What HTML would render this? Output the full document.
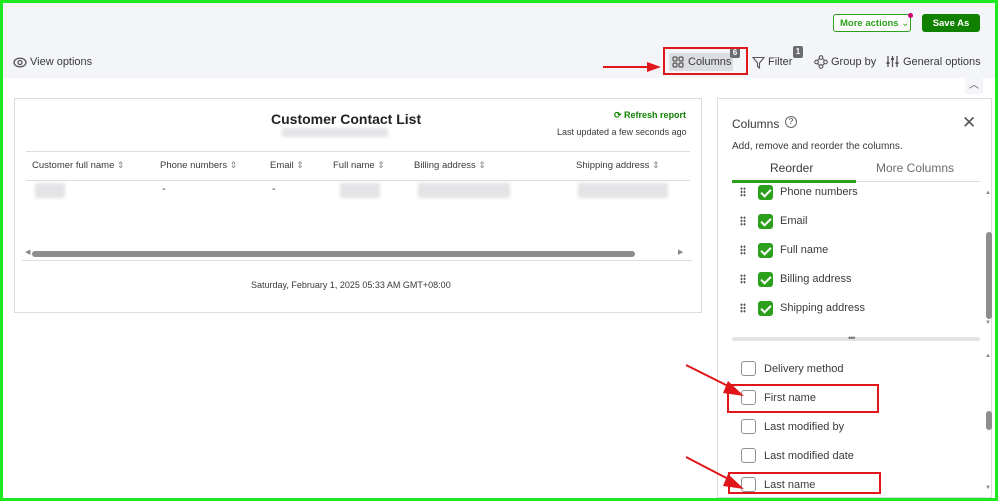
<!DOCTYPE html>
<html><head><meta charset="utf-8"><style>
*{box-sizing:border-box;margin:0;padding:0}
body{width:998px;height:501px;overflow:hidden;font-family:"Liberation Sans",sans-serif;background:#fff;position:relative;color:#393a3d}
.a{position:absolute}
.t{font-size:11px;white-space:nowrap}
.cb{position:absolute;width:15px;height:15px;border-radius:3px;background:#2ca01c}
.cb:after{content:"";position:absolute;left:5px;top:2px;width:4px;height:8px;border:solid #fff;border-width:0 2px 2px 0;transform:rotate(45deg)}
.ub{position:absolute;width:15px;height:15px;border-radius:3px;border:1px solid #8d9096;background:#fff}
.dr{position:absolute;width:6px;height:10px;background-image:radial-gradient(circle,#555 1px,transparent 1.2px);background-size:3px 3.3px}
.blur{position:absolute;background:#e4e4e6;filter:blur(1.5px)}
.rb{position:absolute;border:2px solid #e0161b}
.s{color:#888;font-size:9px}
</style></head><body>
<div class="a" style="left:0;top:0;width:998px;height:78px;background:#f4f5f8"></div>
<div class="a t" style="left:833px;top:14px;width:78px;height:18px;border:1.5px solid #2ca01c;border-radius:3px;background:#fff;color:#2ca01c;font-weight:bold;font-size:9.5px;display:flex;align-items:center;padding-left:6px">More actions&nbsp;<span style="font-weight:normal">⌄</span></div>
<div class="a" style="left:908px;top:13px;width:5px;height:5px;border-radius:50%;background:#c9007a"></div>
<div class="a t" style="left:922px;top:14px;width:58px;height:18px;border-radius:3px;background:#108000;color:#fff;font-weight:bold;font-size:9.5px;display:flex;align-items:center;justify-content:center">Save As</div>
<svg class="a" style="left:13px;top:57px" width="14" height="11" viewBox="0 0 14 11"><ellipse cx="7" cy="5.5" rx="6" ry="4.3" fill="none" stroke="#555" stroke-width="1.3"/><circle cx="7" cy="5.5" r="2" fill="none" stroke="#555" stroke-width="1.3"/></svg>
<div class="a t" style="left:30px;top:56px;color:#393a3d">View options</div>
<div class="a" style="left:669px;top:53px;width:64px;height:18px;background:#dcdde0;border-radius:2px"></div>
<svg class="a" style="left:672px;top:56px" width="12" height="12" viewBox="0 0 12 12" fill="none" stroke="#555" stroke-width="1.2"><rect x="1" y="1" width="4" height="4" rx="1.2"/><rect x="7" y="1" width="4" height="4" rx="1.2"/><rect x="1" y="7" width="4" height="4" rx="1.2"/><rect x="7" y="7" width="4" height="4" rx="1.2"/></svg>
<div class="a t" style="left:688px;top:56px">Columns</div>
<div class="a" style="left:730px;top:47px;width:10px;height:11px;background:#6b6c72;border-radius:2px;color:#fff;font-size:8px;font-weight:bold;text-align:center;line-height:11px">6</div>
<div class="rb" style="left:663px;top:47px;width:85px;height:28px"></div>
<svg class="a" style="left:752px;top:56px" width="13" height="13" viewBox="0 0 13 13"><path d="M1 1.5H12L7.5 7V12L5.5 10.5V7Z" fill="none" stroke="#555" stroke-width="1.1"/></svg>
<div class="a t" style="left:768px;top:56px">Filter</div>
<div class="a" style="left:793px;top:46px;width:10px;height:12px;background:#6b6c72;border-radius:2px;color:#fff;font-size:8px;font-weight:bold;text-align:center;line-height:12px">1</div>
<svg class="a" style="left:814px;top:55px" width="14" height="14" viewBox="0 0 14 14" fill="none" stroke="#555" stroke-width="1.1"><circle cx="7" cy="2.5" r="1.8"/><circle cx="2.5" cy="7" r="1.8"/><circle cx="11.5" cy="7" r="1.8"/><circle cx="7" cy="11.5" r="1.8"/><path d="M5.5 3.5L3.5 5.5M8.5 3.5L10.5 5.5M3.5 8.5L5.5 10.5M10.5 8.5L8.5 10.5"/></svg>
<div class="a t" style="left:831px;top:56px">Group by</div>
<svg class="a" style="left:886px;top:55px" width="13" height="13" viewBox="0 0 13 13" stroke="#555" stroke-width="1.3"><path d="M2 1V12M6.5 1V12M11 1V12"/><path d="M0.5 8H3.5M5 4H8M9.5 8H12.5" stroke-width="2"/></svg>
<div class="a t" style="left:903px;top:56px">General options</div>
<svg class="a" style="left:603px;top:61px" width="60" height="12"><path d="M0 6L46 6" stroke="#e0161b" stroke-width="2"/><path d="M44 1L58 6L44 11Z" fill="#e0161b"/></svg>
<div class="a" style="left:965px;top:78px;width:18px;height:16px;background:#f4f5f8;border-radius:2px;font-size:10px;text-align:center;color:#555;line-height:16px">︿</div>
<div class="a" style="left:14px;top:98px;width:688px;height:215px;border:1px solid #dcdcde"></div>
<div class="a" style="left:271px;top:111px;font-size:14px;font-weight:bold;color:#222">Customer Contact List</div>
<div class="blur" style="left:282px;top:128px;width:106px;height:9px"></div>
<div class="a t" style="left:614px;top:110px;font-size:9px;color:#108000;font-weight:bold">⟳ Refresh report</div>
<div class="a t" style="left:557px;top:127px;font-size:9px;color:#393a3d">Last updated a few seconds ago</div>
<div class="a" style="left:26px;top:151px;width:664px;height:1px;background:#dcdcde"></div>
<div class="a t" style="left:32px;top:160px;font-size:9.5px">Customer full name <span class="s">⇕</span></div>
<div class="a t" style="left:160px;top:160px;font-size:9.5px">Phone numbers <span class="s">⇕</span></div>
<div class="a t" style="left:270px;top:160px;font-size:9.5px">Email <span class="s">⇕</span></div>
<div class="a t" style="left:333px;top:160px;font-size:9.5px">Full name <span class="s">⇕</span></div>
<div class="a t" style="left:414px;top:160px;font-size:9.5px">Billing address <span class="s">⇕</span></div>
<div class="a t" style="left:576px;top:160px;font-size:9.5px">Shipping address <span class="s">⇕</span></div>
<div class="a" style="left:26px;top:180px;width:664px;height:1px;background:#dcdcde"></div>
<div class="blur" style="left:35px;top:183px;width:30px;height:15px"></div>
<div class="a t" style="left:162px;top:183px">-</div>
<div class="a t" style="left:272px;top:183px">-</div>
<div class="blur" style="left:340px;top:183px;width:40px;height:15px"></div>
<div class="blur" style="left:418px;top:183px;width:92px;height:15px"></div>
<div class="blur" style="left:578px;top:183px;width:90px;height:15px"></div>
<div class="a" style="left:25px;top:248px;font-size:7px;color:#888">◀</div>
<div class="a" style="left:32px;top:251px;width:603px;height:6px;border-radius:3px;background:#8d8d8f"></div>
<div class="a" style="left:678px;top:248px;font-size:7px;color:#888">▶</div>
<div class="a" style="left:22px;top:260px;width:670px;height:1px;background:#dcdcde"></div>
<div class="a t" style="left:251px;top:280px;font-size:9px">Saturday, February 1, 2025 05:33 AM GMT+08:00</div>
<div class="a" style="left:717px;top:98px;width:275px;height:400px;border:1px solid #dcdcde;background:#fff"></div>
<div class="a t" style="left:732px;top:117px;font-size:12px">Columns</div>
<div class="a" style="left:785px;top:116px;width:12px;height:12px;border:1px solid #666;border-radius:50%;font-size:8px;text-align:center;line-height:10px">?</div>
<div class="a" style="left:962px;top:113px;font-size:17px;color:#555">✕</div>
<div class="a t" style="left:732px;top:141px;font-size:10px">Add, remove and reorder the columns.</div>
<div class="a t" style="left:770px;top:161px;font-size:12px">Reorder</div>
<div class="a t" style="left:876px;top:161px;font-size:12px;color:#6b6c72">More Columns</div>
<div class="a" style="left:732px;top:181px;width:248px;height:1px;background:#dcdcde"></div>
<div class="a" style="left:732px;top:180px;width:124px;height:3px;background:#2ca01c"></div>
<div class="a" style="left:985px;top:190px;font-size:6px;color:#888">▲</div>
<div class="a" style="left:986px;top:232px;width:6px;height:87px;border-radius:3px;background:#8d8d8f"></div>
<div class="a" style="left:985px;top:320px;font-size:6px;color:#888">▼</div>
<div class="dr" style="left:740px;top:187px"></div><div class="cb" style="left:758px;top:185px"></div><div class="a t" style="left:780px;top:186px">Phone numbers</div>
<div class="dr" style="left:740px;top:216px"></div><div class="cb" style="left:758px;top:214px"></div><div class="a t" style="left:780px;top:215px">Email</div>
<div class="dr" style="left:740px;top:245px"></div><div class="cb" style="left:758px;top:243px"></div><div class="a t" style="left:780px;top:244px">Full name</div>
<div class="dr" style="left:740px;top:274px"></div><div class="cb" style="left:758px;top:272px"></div><div class="a t" style="left:780px;top:273px">Billing address</div>
<div class="dr" style="left:740px;top:303px"></div><div class="cb" style="left:758px;top:301px"></div><div class="a t" style="left:780px;top:302px">Shipping address</div>
<div class="a" style="left:732px;top:337px;width:248px;height:4px;border-radius:2px;background:#e3e4e6"></div>
<div class="a" style="left:848px;top:333px;font-size:9px;color:#777;letter-spacing:-1px">•••</div>
<div class="a" style="left:985px;top:353px;font-size:6px;color:#888">▲</div>
<div class="a" style="left:986px;top:411px;width:6px;height:19px;border-radius:3px;background:#8d8d8f"></div>
<div class="a" style="left:985px;top:485px;font-size:6px;color:#888">▼</div>
<div class="ub" style="left:741px;top:361px"></div><div class="a t" style="left:764px;top:363px">Delivery method</div>
<div class="ub" style="left:741px;top:390px"></div><div class="a t" style="left:764px;top:392px">First name</div>
<div class="ub" style="left:741px;top:419px"></div><div class="a t" style="left:764px;top:421px">Last modified by</div>
<div class="ub" style="left:741px;top:448px"></div><div class="a t" style="left:764px;top:450px">Last modified date</div>
<div class="ub" style="left:741px;top:477px"></div><div class="a t" style="left:764px;top:479px">Last name</div>
<div class="rb" style="left:727px;top:384px;width:152px;height:29px"></div>
<div class="rb" style="left:728px;top:472px;width:153px;height:22px"></div>
<svg class="a" style="left:684px;top:362px" width="65" height="135"><path d="M2 3L50 27" stroke="#e0161b" stroke-width="2"/><path d="M44 19L60 34L39 31Z" fill="#e0161b"/><path d="M2 95L50 120" stroke="#e0161b" stroke-width="2"/><path d="M44 112L60 127L39 124Z" fill="#e0161b"/></svg>
<div class="a" style="left:0;top:0;width:998px;height:501px;border:3px solid #1ee81e"></div>
</body></html>
